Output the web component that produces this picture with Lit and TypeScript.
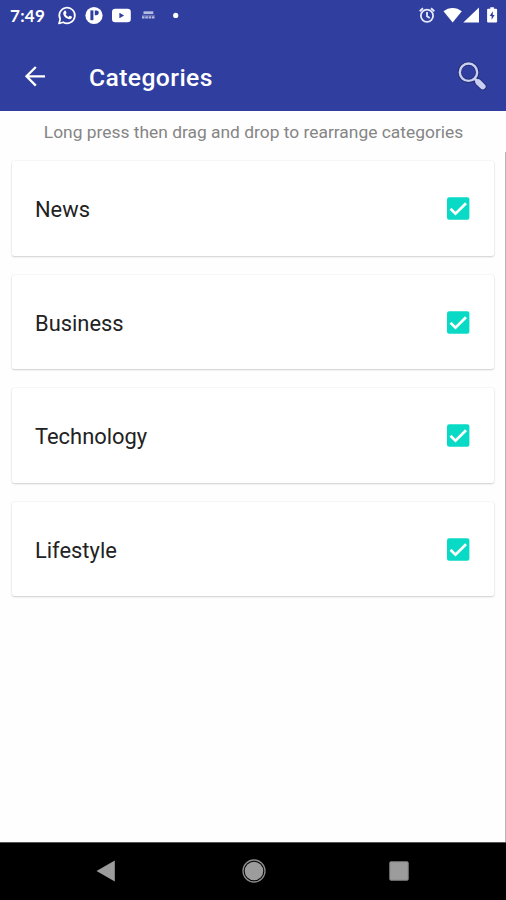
import { LitElement, html, css } from "lit";
import { customElement, property, state } from "lit/decorators.js";

@customElement("status-bar")
class StatusBar extends LitElement {
  static styles = css`
    :host { display: flex; height: 32px; color: #fff; align-items: center; }
    .time { width: 47px; padding-left: 10px; font: 700 17px/32px Lato, sans-serif; letter-spacing: 0.3px; }
    svg { display: block; }
    .right { margin-left: auto; }
  `;
  render() {
    return html`
      <span class="time">7:49</span>
      <svg width="130" height="32" viewBox="57 0 130 32" fill="#fff">
        <path d="M59 23.5l1.2-4.4a7.8 7.8 0 1 1 3 3.1z" fill="none" stroke="#fff" stroke-width="1.7" stroke-linejoin="round" />
        <path d="M64.4 10.9c.5-.4 1.1-.4 1.4.2l.7 1.6c.1.5-.6 1.1-.9 1.5.7 1.3 1.6 2.1 3 2.7.5-.5.9-1.4 1.4-1.2l1.7.9c.5.3.2 1.2-.2 1.7-1 1.1-2.5 1-4 .3-2.1-.9-3.5-2.5-4.1-4.2-.4-1.3-.1-2.6 1-3.5z" />
        <circle cx="94" cy="15.5" r="8.6" />
        <rect x="90.4" y="10.4" width="3" height="9.8" fill="#303f9f" />
        <path d="M94.8 10.4h1.6a2.4 2.4 0 0 1 0 4.8h-1.6z" fill="#303f9f" />
        <rect x="112" y="8.8" width="18.8" height="13.4" rx="3.2" />
        <path d="M119.4 12.7v5.6l4.7-2.8z" fill="#303f9f" />
        <g fill="#b4bae0">
          <path d="M143.5 11.3h9.8v2.7h-9.8z" />
          <path d="M142 14.8h12.8v1H142z" opacity=".5" />
          <path d="M142 16.3h2.6v2.3H142zm3.3 0h2.6v2.3h-2.6zm3.3 0h2.6v2.3h-2.6zm3.3 0h2.6v2.3h-2.6z" />
        </g>
        <circle cx="175.7" cy="15.4" r="2.6" />
      </svg>
      <svg class="right" width="92" height="32" viewBox="414 0 92 32" fill="#fff">
        <g fill="none" stroke="#e8eafa" stroke-width="1.8">
          <circle cx="427" cy="15.8" r="6.1" />
          <path d="M427 12v4.3l2.7 1.7M419.7 11.2l3.3-2.9M434.3 11.2L431 8.3" />
        </g>
        <path d="M443.5 11.3c5.3-4.5 13-4.5 18.3 0L452.7 22.5z" />
        <path d="M479 7.6V22.5h-15.7z" />
        <path d="M490.3 7.2h3.6v1.5h2.2a1 1 0 0 1 1 1v11.9a1 1 0 0 1-1 1h-8a1 1 0 0 1-1-1V9.7a1 1 0 0 1 1-1h2.2z" />
        <path d="M492.8 11.3l-3.1 4.8h1.9v3.7l3-4.9h-1.8z" fill="#303f9f" />
      </svg>
    `;
  }
}

@customElement("app-toolbar")
class AppToolbar extends LitElement {
  static styles = css`
    :host { display: flex; box-sizing: border-box; height: 78.5px; padding: 10px 19px 0 24px; align-items: center; color: #fff; }
    svg { display: block; }
    .title { margin: 4px 0 0 43px; font: 500 24.7px/32px Roboto, sans-serif; letter-spacing: 0.4px; flex: 1; }
  `;
  render() {
    return html`
      <svg width="22" height="22" viewBox="0 0 22 22" fill="none" stroke="#fff" stroke-width="2.3">
        <path d="M21 11.3H3M11.8 2L2.5 11.3l9.3 9.3" />
      </svg>
      <span class="title">Categories</span>
      <svg width="30" height="30" viewBox="0 0 30 30" fill="none">
        <circle cx="11.5" cy="11.2" r="8.7" stroke="#252f72" stroke-width="4.2" />
        <path d="M18 18l2.5 2.5" stroke="#252f72" stroke-width="4.5" />
        <path d="M21 21l4.9 4.7" stroke="#252f72" stroke-width="7.4" stroke-linecap="round" />
        <circle cx="11.5" cy="11.2" r="8.7" stroke="#c9cff2" stroke-width="2.4" />
        <path d="M17.5 17.5l3 3" stroke="#c9cff2" stroke-width="2.8" />
        <path d="M21.2 21.1l4.5 4.4" stroke="#c9cff2" stroke-width="5.8" stroke-linecap="round" />
      </svg>
    `;
  }
}

@customElement("category-card")
class CategoryCard extends LitElement {
  @property() name = "";
  @property({ type: Boolean }) checked = true;
  static styles = css`
    :host {
      display: flex; align-items: center; justify-content: space-between;
      box-sizing: border-box; height: 94.5px; padding: 0 24.3px 0 23px;
      background: #fff; border-radius: 2px;
      box-shadow: 0 1px 2px rgba(0, 0, 0, 0.17), 0 0 1.5px rgba(0, 0, 0, 0.12);
      font: 400 21.9px/30px Roboto, sans-serif; color: #222;
    }
    span { padding-top: 3.6px; }
    svg { display: block; margin-top: 0.6px; }
  `;
  render() {
    return html`
      <span>${this.name}</span>
      <svg width="23" height="23" viewBox="0 0 23 23" @click=${() => (this.checked = !this.checked)}>
        <rect x="0" y=".3" width="22.4" height="22.4" rx="2.2" fill=${this.checked ? "#08dac6" : "#757575"} />
        <path d="M3.5 11.7l5 5L19 6.3" fill="none" stroke="#fff" stroke-width="2.7" />
      </svg>
    `;
  }
}

@customElement("nav-bar")
class NavBar extends LitElement {
  static styles = css`
    :host {
      display: grid; grid-template-columns: 20px 24px 22px; box-sizing: border-box; height: 58.5px;
      background: #000; border-top: 1px solid #555; align-items: center;
      padding: 0 96px; justify-content: space-between;
    }
    svg { display: block; }
    .home { margin-left: 1.5px; }
  `;
  render() {
    return html`
      <svg width="20" height="22" viewBox="0 0 20 22"><path d="M.5 11L18.8.5v21z" fill="#9c9c9c" /></svg>
      <svg class="home" width="24" height="24" viewBox="0 0 24 24">
        <circle cx="12" cy="12" r="11" fill="none" stroke="#8c8c8c" stroke-width="1.3" />
        <circle cx="12" cy="12" r="9.3" fill="#9c9c9c" />
      </svg>
      <svg width="22" height="22" viewBox="0 0 22 22"><rect x="1.8" y="1.8" width="18.4" height="18.4" rx="1" fill="#9c9c9c" stroke="#858585" /></svg>
    `;
  }
}

@customElement("app-root")
class AppRoot extends LitElement {
  @state() private categories = ["News", "Business", "Technology", "Lifestyle"];
  static styles = css`
    :host { display: flex; flex-direction: column; height: 900px; background: #fefefe; overflow: hidden; }
    header { background: #303f9f; height: 110.5px; }
    .hint {
      height: 41px; line-height: 43px; text-align: center; white-space: nowrap; padding-left: 1px;
      font-family: Roboto, sans-serif; font-size: 17.4px; color: #858585;
    }
    .list {
      flex: 1; display: flex; flex-direction: column; gap: 19px;
      padding: 9.5px 11px 0 12px; border-right: 1px solid #b4b4b4;
    }
  `;
  render() {
    return html`
      <header><status-bar></status-bar><app-toolbar></app-toolbar></header>
      <div class="hint">Long press then drag and drop to rearrange categories</div>
      <div class="list">${this.categories.map((c) => html`<category-card .name=${c}></category-card>`)}</div>
      <nav-bar></nav-bar>
    `;
  }
}
